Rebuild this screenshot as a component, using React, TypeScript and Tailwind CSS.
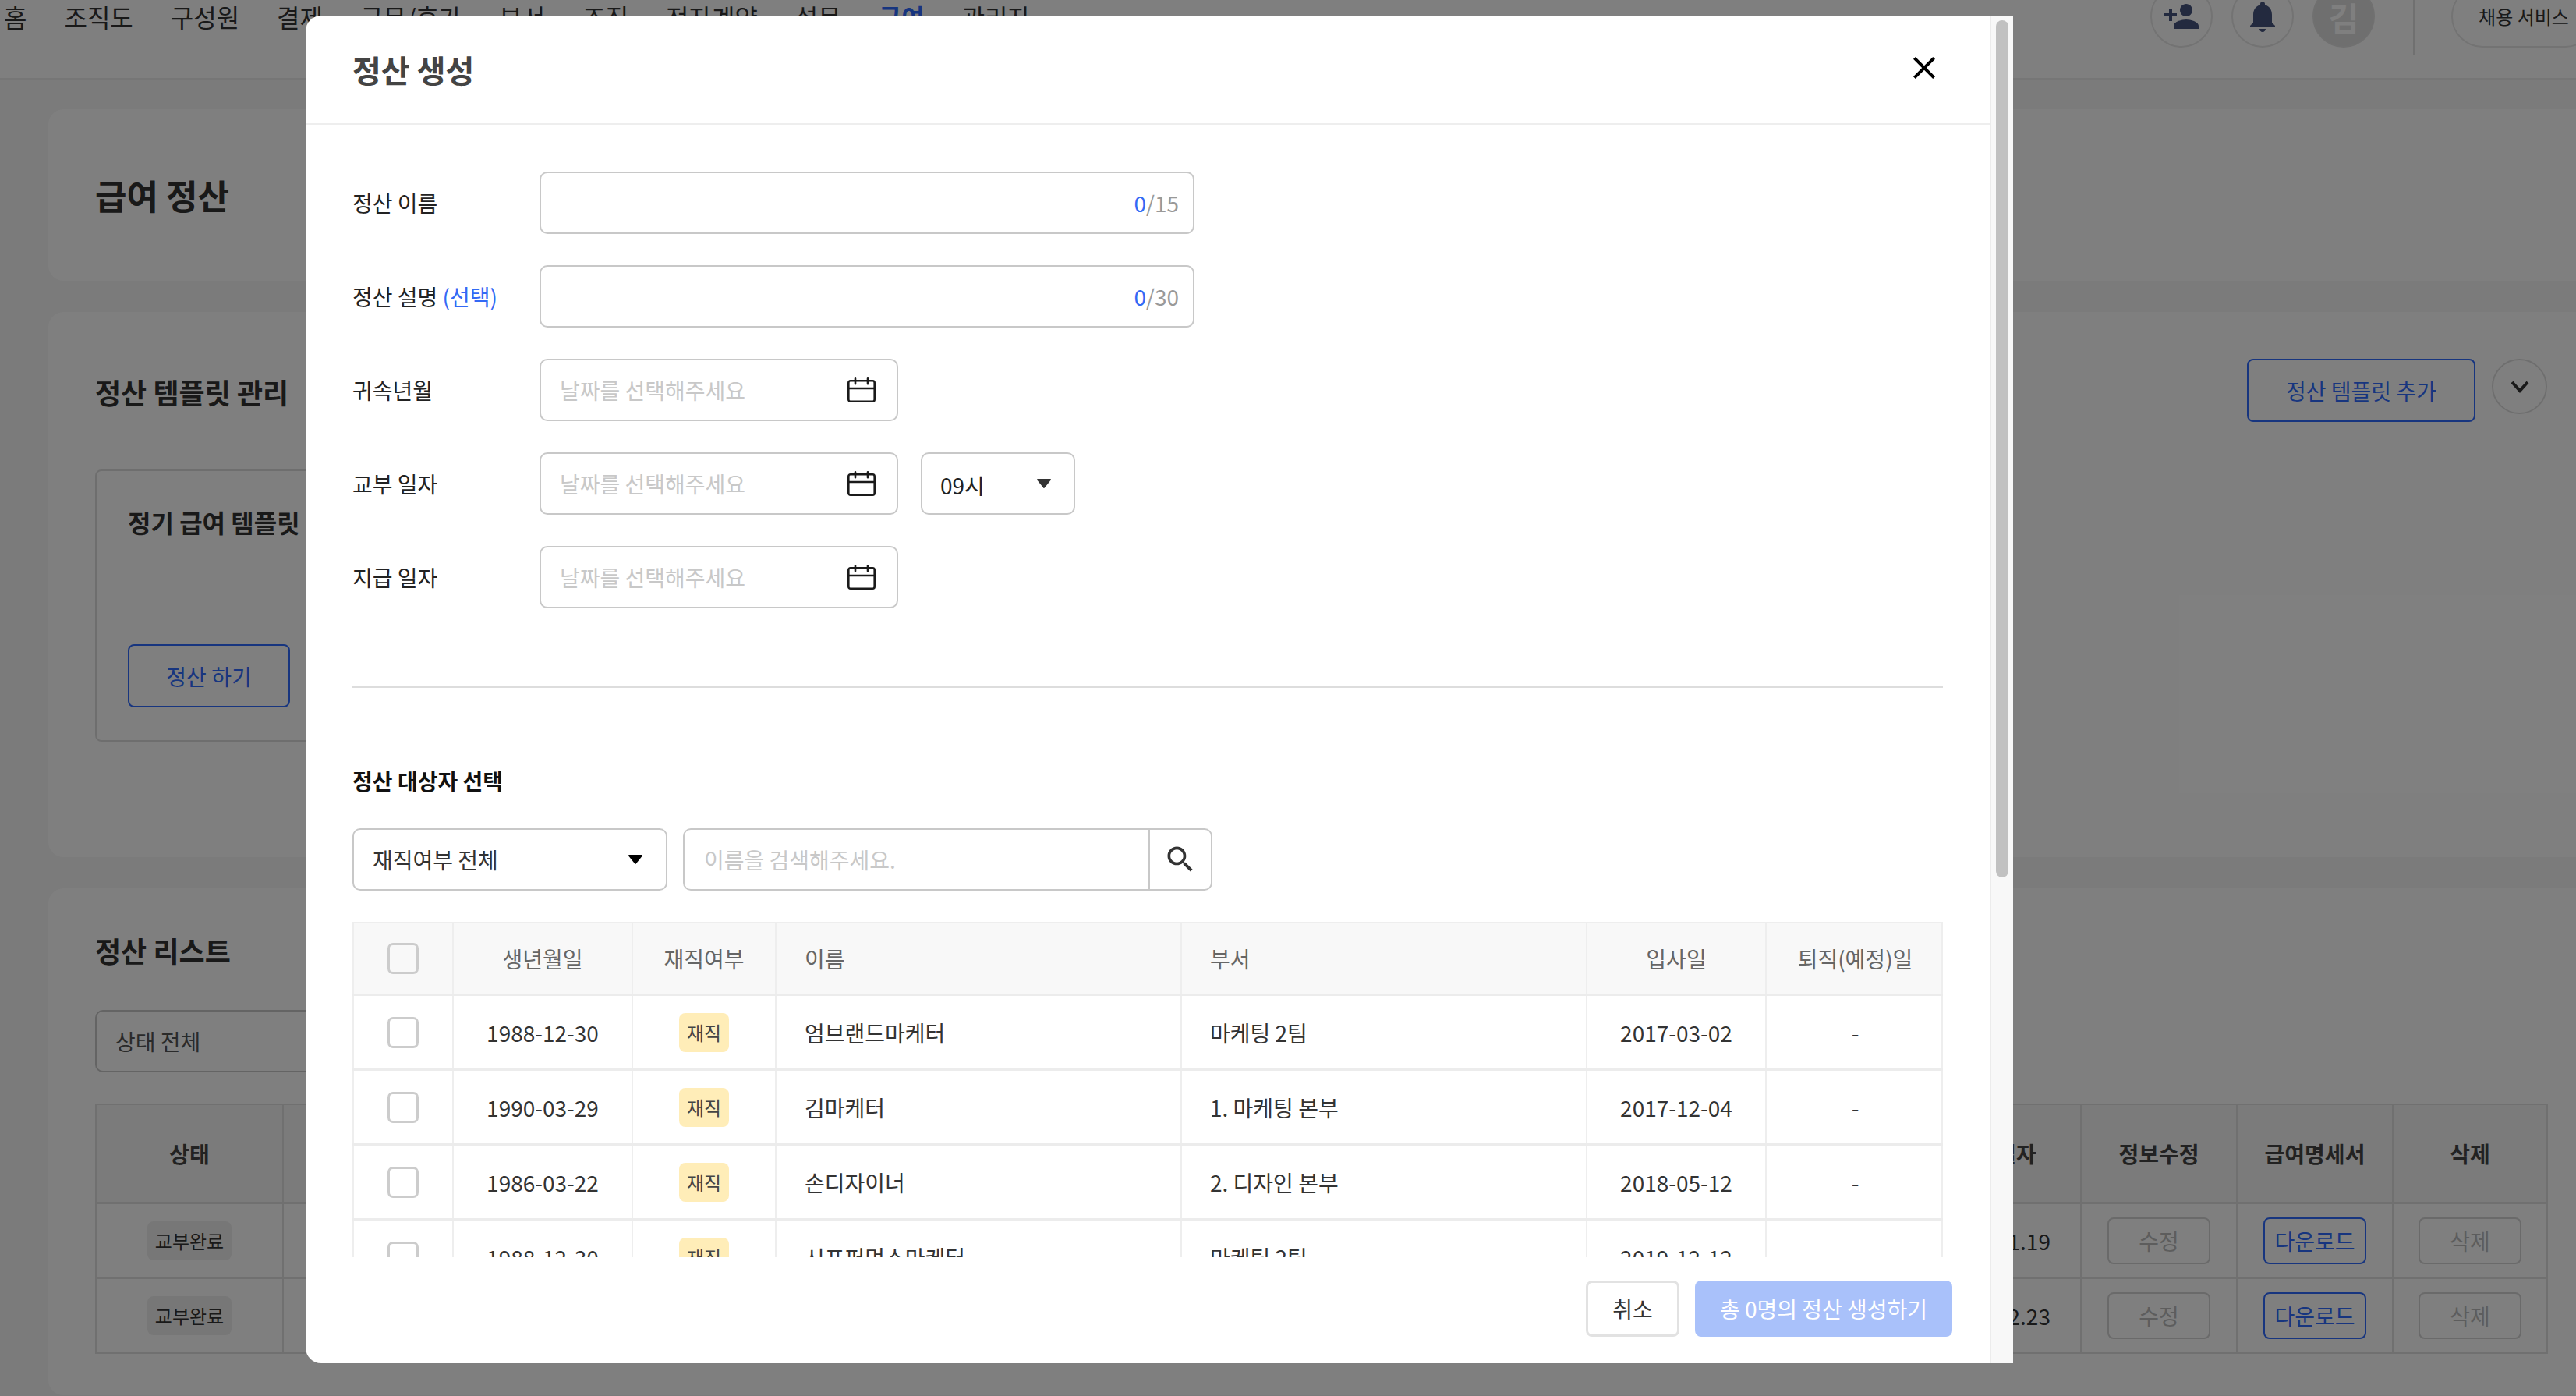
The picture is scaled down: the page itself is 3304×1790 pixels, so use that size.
const navItems = ["홈", "조직도", "구성원", "결제", "근무/휴가", "부서", "조직", "전자계약", "설문", "급여", "관리자"];

const employees = [
  { birth: "1988-12-30", name: "엄브랜드마케터", dept: "마케팅 2팀", joined: "2017-03-02" },
  { birth: "1990-03-29", name: "김마케터", dept: "1. 마케팅 본부", joined: "2017-12-04" },
  { birth: "1986-03-22", name: "손디자이너", dept: "2. 디자인 본부", joined: "2018-05-12" },
  { birth: "1988-12-30", name: "시프퍼먼스마케터", dept: "마케팅 2팀", joined: "2019-12-12" },
];

const payrolls = ["2021.11.19", "2021.12.23"];

function Caret({ className }: { className: string }) {
  return (
    <svg viewBox="0 0 20 14" className={className}>
      <path d="M2 2h16l-8 10z" fill="currentColor" stroke="currentColor" strokeWidth="2" strokeLinejoin="round" />
    </svg>
  );
}

function CalendarIcon() {
  return (
    <svg viewBox="0 0 36 32" className="w-[36px] h-[32px] shrink-0" fill="none" stroke="#1a1a1a" strokeWidth="2.6" strokeLinecap="round" strokeLinejoin="round">
      <rect x="1.3" y="4.3" width="33.4" height="26.4" rx="2.5" />
      <path d="M1.3 14h33.4M10 1.3v7M26 1.3v7" />
    </svg>
  );
}

function DateInput() {
  return (
    <div className="flex items-center w-[460px] h-[80px] pl-[24px] pr-[27px] border-2 border-[#c8c8c8] rounded-[10px]">
      <input placeholder="날짜를 선택해주세요" className="flex-1 min-w-0 text-[28px] outline-none placeholder:text-[#c8c8c8]" />
      <CalendarIcon />
    </div>
  );
}

function CountInput({ max }: { max: number }) {
  return (
    <div className="flex items-center justify-end w-[840px] h-[80px] pr-[18px] border-2 border-[#c8c8c8] rounded-[10px] text-[28px]">
      <span className="text-[#3369f5]">0</span>
      <span className="text-[#999999]">/{max}</span>
    </div>
  );
}

function FormRow({ label, children }: { label: React.ReactNode; children: React.ReactNode }) {
  return (
    <div className="flex items-center h-[80px]">
      <div className="w-[240px] shrink-0 text-[28px] text-[#222222]">{label}</div>
      {children}
    </div>
  );
}

function Checkbox() {
  return <div className="w-[40px] h-[40px] border-[3px] border-[#cccccc] rounded-[7px]" />;
}

const cell = "flex items-center border-r-2 border-[#eeeeee] text-[28px]";
const modalCols = "grid grid-cols-[130px_230px_184px_520px_520px_230px_226px]";
const listCols = "grid grid-cols-[240px_1fr_224px_200px_200px_198px]";
const listCell = "flex items-center justify-center border-r-2 border-[#e0e0e0]";

function Background() {
  return (
    <div className="flex flex-col">
      <header className="h-[102px] shrink-0 bg-white border-b-2 border-[#ececec]">
        <div className="flex items-center justify-between h-[42px] pl-[5px]">
          <nav className="flex items-center gap-[48px] text-[32px] text-[#333333]">
            {navItems.map((item) => (
              <span key={item} className={item === "급여" ? "font-bold text-[#2f6bff]" : ""}>
                {item}
              </span>
            ))}
          </nav>
          <div className="flex items-center gap-[24px] mr-[-26px]">
            <div className="flex items-center justify-center w-[80px] h-[80px] rounded-full border-2 border-[#e6e6e6]">
              <svg viewBox="0 0 24 24" className="w-[48px] h-[48px]" fill="#46547e">
                <path d="M15 12c2.21 0 4-1.79 4-4s-1.79-4-4-4-4 1.79-4 4 1.79 4 4 4zm-9-2V7H4v3H1v2h3v3h2v-3h3v-2H6zm9 4c-2.67 0-8 1.34-8 4v2h16v-2c0-2.66-5.33-4-8-4z" />
              </svg>
            </div>
            <div className="flex items-center justify-center w-[80px] h-[80px] rounded-full border-2 border-[#e6e6e6]">
              <svg viewBox="0 0 24 24" className="w-[48px] h-[48px]" fill="#46547e">
                <path d="M12 22c1.1 0 2-.9 2-2h-4c0 1.1.89 2 2 2zm6-6v-5c0-3.07-1.64-5.64-4.5-6.32V4c0-.83-.67-1.5-1.5-1.5s-1.5.67-1.5 1.5v.68C7.63 5.36 6 7.92 6 11v5l-2 2v1h16v-1l-2-2z" />
              </svg>
            </div>
            <div className="flex items-center justify-center w-[80px] h-[80px] rounded-full bg-[#dedede] border-2 border-[#e0e0e0] text-[42px] font-bold text-white">
              김
            </div>
            <div className="w-[2px] h-[100px] ml-[25px] mr-[23px] bg-[#e0e0e0]" />
            <div className="flex items-center justify-center w-[186px] h-[80px] rounded-full border-2 border-[#e6e6e6] text-[24px] text-[#333333]">
              채용 서비스
            </div>
          </div>
        </div>
      </header>

      <main className="flex flex-col gap-[40px] pt-[38px] pl-[62px]">
        <section className="flex items-center h-[220px] pl-[60px] bg-white rounded-l-[20px]">
          <h1 className="text-[44px] font-bold text-[#333333]">급여 정산</h1>
        </section>

        <section className="h-[699px] pt-[60px] pl-[60px] pr-[37px] bg-white rounded-l-[20px]">
          <div className="flex items-start justify-between h-[81px]">
            <h2 className="text-[36px] leading-[84px] font-bold text-[#333333]">정산 템플릿 관리</h2>
            <div className="flex items-start gap-[21px]">
              <button className="w-[293px] h-[81px] border-2 border-[#2f6bff] rounded-[8px] text-[28px] text-[#2f6bff]">정산 템플릿 추가</button>
              <div className="flex items-center justify-center w-[71px] h-[71px] rounded-full border-2 border-[#dddddd]">
                <svg viewBox="0 0 24 16" className="w-[24px] h-[16px]" fill="none" stroke="#333333" strokeWidth="4">
                  <path d="M2 2l10 11L22 2" />
                </svg>
              </div>
            </div>
          </div>
          <div className="flex flex-col justify-between w-[520px] h-[349px] mt-[61px] pt-[42px] pb-[42px] pl-[40px] border-2 border-[#dddddd] rounded-[8px]">
            <h3 className="text-[32px] leading-[46px] font-bold text-[#333333]">정기 급여 템플릿</h3>
            <button className="w-[208px] h-[81px] border-2 border-[#2f6bff] rounded-[8px] text-[28px] text-[#2f6bff]">정산 하기</button>
          </div>
        </section>

        <section className="h-[650px] pt-[54px] pl-[60px] bg-white rounded-l-[20px]">
          <h2 className="text-[36px] leading-[50px] font-bold text-[#333333]">정산 리스트</h2>
          <div className="flex items-center w-[400px] h-[80px] mt-[52px] pl-[24px] border-2 border-[#c8c8c8] rounded-[10px] text-[28px] text-[#555555]">상태 전체</div>
          <div className="w-[3146px] mt-[40px] border-t-2 border-l-2 border-[#e0e0e0]">
            <div className={`${listCols} h-[127px] bg-[#f7f7f7] border-b-[3px] border-[#e0e0e0] text-[28px] font-bold text-[#444444]`}>
              {["상태", "", "지급 일자", "정보수정", "급여명세서", "삭제"].map((title) => (
                <div key={title} className={listCell}>
                  {title}
                </div>
              ))}
            </div>
            {payrolls.map((date) => (
              <div key={date} className={`${listCols} h-[96px] border-b-[3px] border-[#e0e0e0]`}>
                <div className={listCell}>
                  <span className="flex items-center justify-center w-[108px] h-[50px] rounded-[8px] bg-[#eeeeee] text-[24px] text-[#333333]">교부완료</span>
                </div>
                <div className={listCell} />
                <div className={`${listCell} pl-[6px] text-[28px] text-[#333333]`}>{date}</div>
                <div className={listCell}>
                  <span className="flex items-center justify-center w-[132px] h-[60px] border-2 border-[#d4d4d4] rounded-[8px] text-[28px] text-[#bbbbbb]">수정</span>
                </div>
                <div className={listCell}>
                  <span className="flex items-center justify-center w-[132px] h-[60px] border-2 border-[#2f6bff] rounded-[8px] text-[28px] text-[#2f6bff]">다운로드</span>
                </div>
                <div className={listCell}>
                  <span className="flex items-center justify-center w-[132px] h-[60px] border-2 border-[#d4d4d4] rounded-[8px] text-[28px] text-[#bbbbbb]">삭제</span>
                </div>
              </div>
            ))}
          </div>
        </section>
      </main>
    </div>
  );
}

function CreateModal() {
  return (
    <div className="absolute left-[392px] top-[20px] flex w-[2190px] h-[1728px] bg-white rounded-l-[20px] overflow-hidden">
      <div className="flex flex-col flex-1 min-w-0">
        <div className="flex items-center justify-between h-[140px] shrink-0 pl-[60px] pr-[60px] border-b-2 border-[#eeeeee]">
          <h2 className="text-[40px] font-bold text-[#444444]">정산 생성</h2>
          <svg viewBox="0 0 24 24" className="w-[48px] h-[48px] mb-[4px]" fill="#000000">
            <path d="M19 6.41L17.59 5 12 10.59 6.41 5 5 6.41 10.59 12 5 17.59 6.41 19 12 13.41 17.59 19 19 17.59 13.41 12z" />
          </svg>
        </div>

        <div className="h-[1452px] shrink-0 overflow-hidden pt-[60px] px-[60px]">
          <div className="flex flex-col gap-[40px]">
            <FormRow label="정산 이름">
              <CountInput max={15} />
            </FormRow>
            <FormRow label={<>정산 설명 <span className="text-[#3369f5]">(선택)</span></>}>
              <CountInput max={30} />
            </FormRow>
            <FormRow label="귀속년월">
              <DateInput />
            </FormRow>
            <FormRow label="교부 일자">
              <DateInput />
              <div className="flex items-center justify-between w-[198px] h-[80px] ml-[29px] pl-[23px] pr-[28px] border-2 border-[#c8c8c8] rounded-[10px] text-[28px] text-[#222222]">
                <span className="mt-[3px]">09시</span>
                <Caret className="w-[20px] h-[14px] text-[#333333]" />
              </div>
            </FormRow>
            <FormRow label="지급 일자">
              <DateInput />
            </FormRow>
          </div>

          <div className="h-[2px] mt-[100px] bg-[#dddddd]" />

          <h3 className="mt-[99px] text-[28px] leading-[40px] font-bold text-[#111111]">정산 대상자 선택</h3>

          <div className="flex gap-[20px] mt-[41px]">
            <div className="flex items-center justify-between w-[404px] h-[80px] pl-[24px] pr-[29px] border-2 border-[#c8c8c8] rounded-[10px] text-[28px] text-[#333333]">
              재직여부 전체
              <Caret className="w-[20px] h-[14px] text-black" />
            </div>
            <div className="flex items-center w-[679px] h-[80px] border-2 border-[#c8c8c8] rounded-[10px]">
              <input placeholder="이름을 검색해주세요." className="flex-1 min-w-0 pl-[25px] text-[28px] outline-none placeholder:text-[#c8c8c8]" />
              <div className="flex items-center justify-center w-[80px] h-full border-l-2 border-[#c8c8c8]">
                <svg viewBox="0 0 24 24" className="w-[44px] h-[44px]" fill="#333333">
                  <path d="M15.5 14h-.79l-.28-.27C15.41 12.59 16 11.11 16 9.5 16 5.91 13.09 3 9.5 3S3 5.91 3 9.5 5.91 16 9.5 16c1.61 0 3.09-.59 4.23-1.57l.27.28v.79l5 4.99L20.49 19l-4.99-5zm-6 0C7.01 14 5 11.99 5 9.5S7.01 5 9.5 5 14 7.01 14 9.5 11.99 14 9.5 14z" />
                </svg>
              </div>
            </div>
          </div>

          <div className="mt-[40px] border-t-2 border-[#eeeeee]">
            <div className={`${modalCols} h-[93px] bg-[#f8f8f8] border-b-[3px] border-[#ececec] text-[#666666]`}>
              <div className={`${cell} justify-center border-l-2`}>
                <Checkbox />
              </div>
              <div className={`${cell} justify-center`}>생년월일</div>
              <div className={`${cell} justify-center`}>재직여부</div>
              <div className={`${cell} pl-[36px]`}>이름</div>
              <div className={`${cell} pl-[36px]`}>부서</div>
              <div className={`${cell} justify-center`}>입사일</div>
              <div className={`${cell} justify-center pl-[3px]`}>퇴직(예정)일</div>
            </div>
            {employees.map((emp, i) => (
              <div key={i} className={`${modalCols} h-[96px] border-b-[3px] border-[#ececec] text-[#333333]`}>
                <div className={`${cell} justify-center border-l-2`}>
                  <Checkbox />
                </div>
                <div className={`${cell} justify-center`}>{emp.birth}</div>
                <div className={`${cell} justify-center`}>
                  <span className="flex items-center justify-center w-[64px] h-[50px] rounded-[8px] bg-[#ffedb8] text-[24px] text-[#444444]">재직</span>
                </div>
                <div className={`${cell} pl-[36px]`}>{emp.name}</div>
                <div className={`${cell} pl-[36px]`}>{emp.dept}</div>
                <div className={`${cell} justify-center`}>{emp.joined}</div>
                <div className={`${cell} justify-center pl-[3px]`}>-</div>
              </div>
            ))}
          </div>
        </div>

        <div className="flex flex-1 justify-end gap-[20px] pt-[30px] pr-[48px]">
          <button className="w-[120px] h-[72px] border-[3px] border-[#e2e2e2] rounded-[8px] text-[28px] text-[#333333]">취소</button>
          <button className="w-[330px] h-[72px] rounded-[8px] bg-[#a9c1fa] text-[28px] text-white">총 0명의 정산 생성하기</button>
        </div>
      </div>

      <div className="flex justify-center w-[30px] shrink-0 pt-[6px] bg-[#f8f8f8] border-l-2 border-[#ececec]">
        <div className="w-[16px] h-[1099px] rounded-full bg-[#c1c1c1]" />
      </div>
    </div>
  );
}

export default function App() {
  return (
    <div className="relative w-[3304px] h-[1790px] overflow-hidden bg-[#f7f7f7] font-['Noto_Sans_CJK_KR','Noto_Sans',sans-serif]">
      <Background />
      <div className="absolute inset-0 bg-black/50" />
      <CreateModal />
    </div>
  );
}
